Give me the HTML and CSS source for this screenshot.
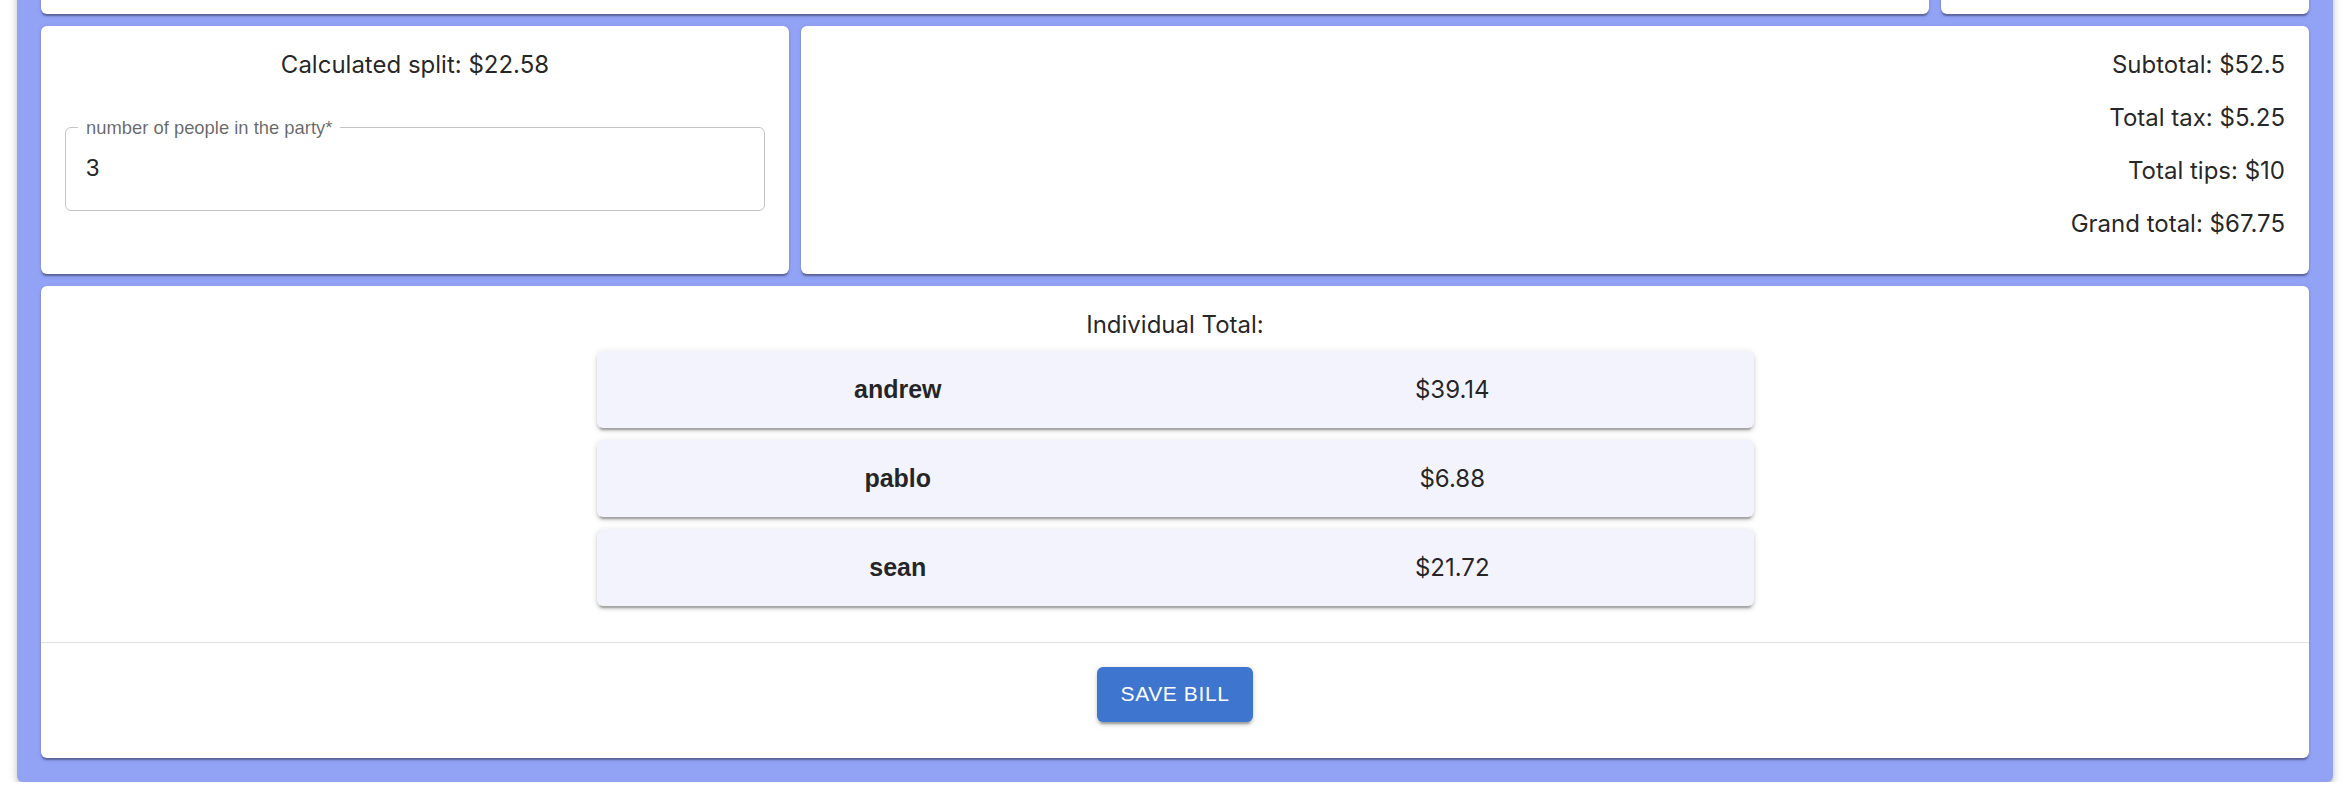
FILE: index.html
```html
<!DOCTYPE html>
<html lang="en">
<head>
<meta charset="utf-8">
<title>Bill split</title>
<link rel="stylesheet" href="styles.css">
</head>
<body>
<div class="page">
  <div class="panel">
    <div class="grid">
      <div class="col col-10"><div class="card card-top"></div></div>
      <div class="col col-2"><div class="card card-top"></div></div>
    </div>
    <div class="grid">
      <div class="col col-4">
        <div class="card split-card">
          <p class="split-text">Calculated split: $22.58</p>
          <fieldset class="field">
            <legend class="field-label">number of people in the party*</legend>
            <input class="field-input" type="text" value="3">
          </fieldset>
        </div>
      </div>
      <div class="col col-8">
        <div class="card totals-card">
          <p class="total-line">Subtotal: $52.5</p>
          <p class="total-line">Total tax: $5.25</p>
          <p class="total-line">Total tips: $10</p>
          <p class="total-line">Grand total: $67.75</p>
        </div>
      </div>
    </div>
    <div class="card bill-card">
      <div class="bill-content">
        <p class="bill-title">Individual Total:</p>
        <div class="person-list">
          <div class="person-row"><span class="person-name">andrew</span><span class="person-amount">$39.14</span></div>
          <div class="person-row"><span class="person-name">pablo</span><span class="person-amount">$6.88</span></div>
          <div class="person-row"><span class="person-name">sean</span><span class="person-amount">$21.72</span></div>
        </div>
      </div>
      <div class="bill-actions">
        <button class="save-btn" type="button">Save Bill</button>
      </div>
    </div>
  </div>
</div>
</body>
</html>
```
FILE: styles.css
```css
* { box-sizing: border-box; }

html, body {
  margin: 0;
  padding: 0;
  background: #ffffff;
}

body {
  font-family: "Inter", "Liberation Sans", sans-serif;
  color: rgba(0, 0, 0, 0.87);
}

.page {
  padding: 0 14px 0 17px;
}

.panel {
  margin-top: -130px;
  background: #92a2f5;
  border-radius: 6px;
  padding: 24px;
  display: flex;
  flex-direction: column;
  gap: 12px;
  box-shadow: 0 4.5px 4.5px -3px rgba(0,0,0,0.2), 0 4.5px 6px 0 rgba(0,0,0,0.14), 0 1.5px 12px 0 rgba(0,0,0,0.12);
}

.grid {
  display: flex;
  margin-left: -12px;
  width: calc(100% + 12px);
}

.col {
  padding-left: 12px;
  display: flex;
}

.col-10 { width: 83.33333%; }
.col-2 { width: 16.66667%; }
.col-4 { width: 33.33333%; }
.col-8 { width: 66.66667%; }

.card {
  flex: 1;
  background: #ffffff;
  border-radius: 6px;
  box-shadow: 0 3px 1.5px -1.5px rgba(0,0,0,0.2), 0 1.5px 1.5px 0 rgba(0,0,0,0.14), 0 1.5px 4.5px 0 rgba(0,0,0,0.12);
}

.card-top {
  height: 120px;
}

.split-card {
  padding: 24px;
}

.split-text {
  margin: 0;
  text-align: center;
  font-size: 24px;
  line-height: 29px;
}

.field {
  margin: 38px 0 0 0;
  padding: 16px 20px 28px 20px;
  border: 1px solid rgba(0, 0, 0, 0.23);
  border-radius: 6px;
  min-width: 0;
}

.field-label {
  margin-left: -8px;
  padding: 0 8px;
  font-family: "Liberation Sans", Arial, sans-serif;
  font-size: 18.4px;
  line-height: 21px;
  color: rgba(0, 0, 0, 0.6);
}

.field-input {
  display: block;
  width: 100%;
  height: 28px;
  border: none;
  outline: none;
  padding: 0;
  margin: 0;
  background: transparent;
  font-family: "Liberation Sans", Arial, sans-serif;
  font-size: 24px;
  line-height: 28px;
  color: rgba(0, 0, 0, 0.87);
}

.totals-card {
  padding: 24px 24px 36px 24px;
  display: flex;
  flex-direction: column;
  gap: 24px;
  text-align: right;
}

.total-line {
  margin: 0;
  font-size: 24px;
  line-height: 29px;
}

.bill-card {
  display: flex;
  flex-direction: column;
}

.bill-content {
  padding: 24px 24px 36px 24px;
  display: flex;
  flex-direction: column;
  align-items: center;
  gap: 12px;
  border-bottom: 1px solid rgba(0, 0, 0, 0.12);
}

.bill-title {
  margin: 0;
  font-size: 24px;
  line-height: 29px;
}

.person-list {
  width: 1157px;
  display: flex;
  flex-direction: column;
  gap: 12px;
}

.person-row {
  height: 77px;
  padding: 0 24px;
  display: grid;
  grid-template-columns: 1fr 1fr;
  align-items: center;
  background: #f2f3fc;
  border-radius: 6px;
  box-shadow: 0 4.5px 1.5px -3px rgba(0,0,0,0.2), 0 3px 3px 0 rgba(0,0,0,0.14), 0 1.5px 7.5px 0 rgba(0,0,0,0.12);
}

.person-name {
  text-align: center;
  font-family: "Liberation Sans", Arial, sans-serif;
  font-weight: 700;
  font-size: 25px;
  color: rgba(0, 0, 0, 0.87);
}

.person-amount {
  text-align: center;
  font-size: 24px;
}

.bill-actions {
  padding: 24px 0 36px 0;
  display: flex;
  justify-content: center;
}

.save-btn {
  height: 55px;
  padding: 9px 24px;
  border: none;
  border-radius: 6px;
  background: #3d75cf;
  color: #ffffff;
  font-family: "Liberation Sans", Arial, sans-serif;
  font-size: 21px;
  font-weight: 500;
  letter-spacing: 0.6px;
  text-transform: uppercase;
  line-height: 36.75px;
  box-shadow: 0 4.5px 1.5px -3px rgba(0,0,0,0.2), 0 3px 3px 0 rgba(0,0,0,0.14), 0 1.5px 7.5px 0 rgba(0,0,0,0.12);
}
```
